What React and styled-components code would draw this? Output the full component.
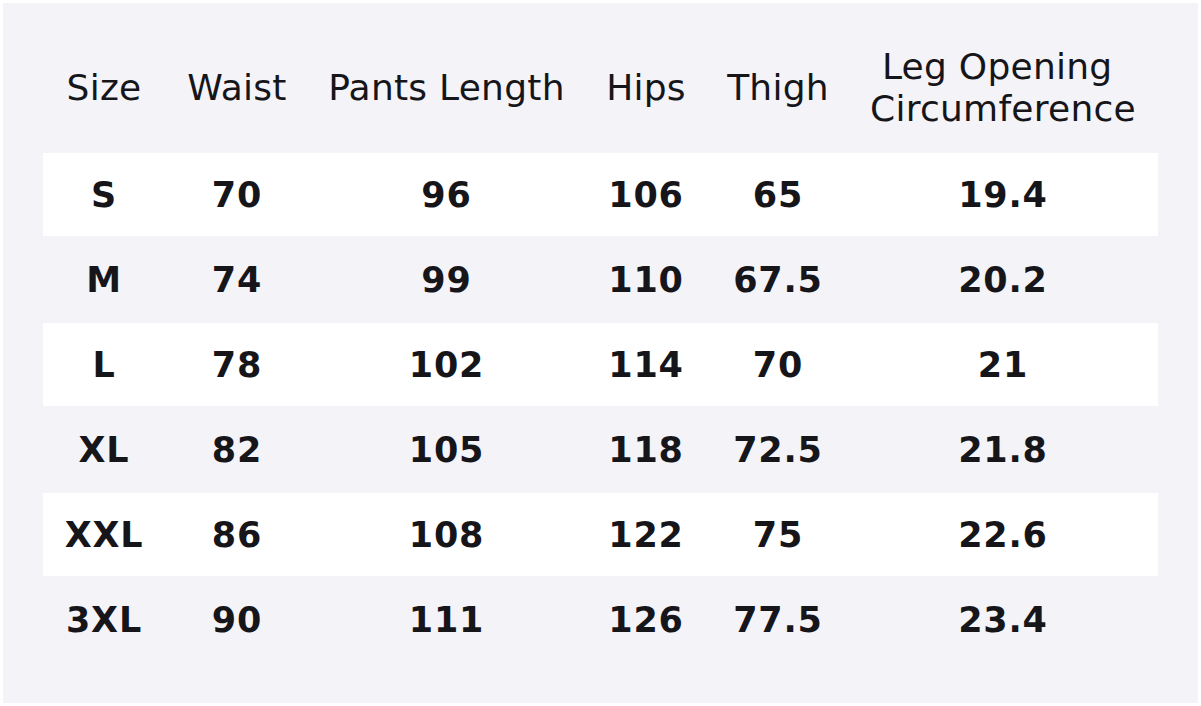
import React from 'react';
import styled, { createGlobalStyle } from 'styled-components';

const GlobalStyle = createGlobalStyle`
  html, body {
    margin: 0;
    padding: 0;
    background-color: #ffffff;
  }
  body {
    padding: 3px;
    font-family: "DejaVu Sans", Verdana, sans-serif;
    color: #16161a;
  }
`;

const Panel = styled.main`
  box-sizing: border-box;
  width: 1195px;
  height: 700px;
  padding: 20px 40px 42px;
  background-color: #f4f3f8;
`;

const colunas = '122px 144px 275px 124px 140px 310px';

const Cabecalho = styled.div`
  display: grid;
  grid-template-columns: ${colunas};
  height: 130px;
  align-items: center;
`;

const Titulo = styled.div`
  text-align: center;
  font-size: 36px;
  font-weight: 400;
  line-height: 42px;
  letter-spacing: 0.25px;
  white-space: pre;
`;

const Corpo = styled.div`
  display: grid;
  row-gap: 2px;
`;

const Linha = styled.div`
  display: grid;
  grid-template-columns: ${colunas};
  height: 83px;
  align-items: center;
  background-color: ${(p) => (p.$clara ? '#ffffff' : 'transparent')};
`;

const Celula = styled.div`
  text-align: center;
  font-size: 35px;
  font-weight: 700;
  letter-spacing: 0.8px;
`;

const titulos = ['Size', 'Waist', 'Pants Length', 'Hips', 'Thigh', 'Leg Opening \nCircumference'];

const medidas = [
  ['S', '70', '96', '106', '65', '19.4'],
  ['M', '74', '99', '110', '67.5', '20.2'],
  ['L', '78', '102', '114', '70', '21'],
  ['XL', '82', '105', '118', '72.5', '21.8'],
  ['XXL', '86', '108', '122', '75', '22.6'],
  ['3XL', '90', '111', '126', '77.5', '23.4'],
];

const App = () => (
  <>
    <GlobalStyle />
    <Panel>
      <Cabecalho>
        {titulos.map((t) => (
          <Titulo key={t}>{t}</Titulo>
        ))}
      </Cabecalho>
      <Corpo>
        {medidas.map((linha, i) => (
          <Linha key={linha[0]} $clara={i % 2 === 0}>
            {linha.map((valor, j) => (
              <Celula key={j}>{valor}</Celula>
            ))}
          </Linha>
        ))}
      </Corpo>
    </Panel>
  </>
);

export default App;
